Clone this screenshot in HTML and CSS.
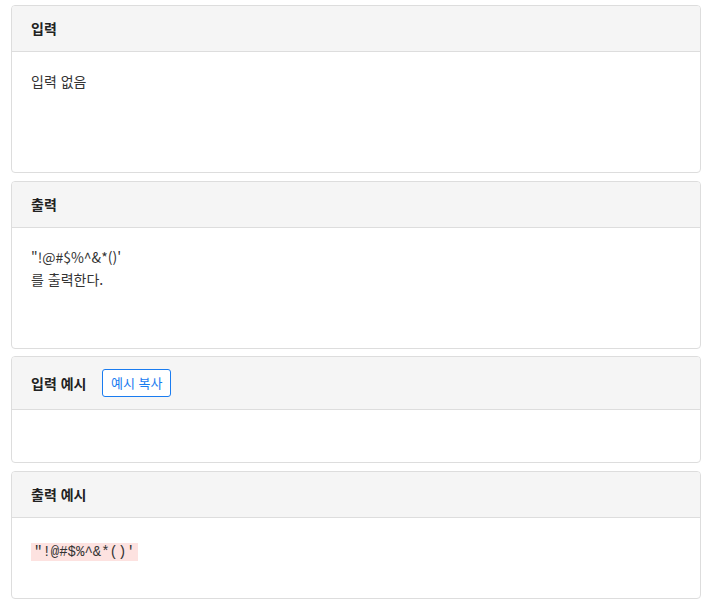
FILE: index.html
```html
<!DOCTYPE html>
<html lang="ko">
<head>
<meta charset="utf-8">
<title>문제</title>
<link rel="stylesheet" href="styles.css">
</head>
<body>
<div class="page">
  <section class="panel">
    <div class="panel-head"><h3 class="panel-title">입력</h3></div>
    <div class="panel-body desc">
      <p>입력 없음</p>
    </div>
  </section>
  <section class="panel">
    <div class="panel-head"><h3 class="panel-title">출력</h3></div>
    <div class="panel-body desc">
      <p>"!@#$%^&amp;*()'<br>를 출력한다.</p>
    </div>
  </section>
  <section class="panel">
    <div class="panel-head">
      <h3 class="panel-title">입력 예시</h3>
      <button class="copy-btn" type="button">예시 복사</button>
    </div>
    <div class="panel-body sample-empty"></div>
  </section>
  <section class="panel">
    <div class="panel-head"><h3 class="panel-title">출력 예시</h3></div>
    <div class="panel-body sample">
      <code class="sample-code">"!@#$%^&amp;*()'</code>
    </div>
  </section>
</div>
</body>
</html>
```
FILE: styles.css
```css
html, body {
  margin: 0;
  padding: 0;
  background: #fff;
}
body {
  font-family: "Noto Sans CJK KR", "Noto Sans", sans-serif;
  font-size: 14px;
  color: #333;
}
.page {
  width: 690px;
  padding: 5px 0 0 11px;
}
.panel {
  border: 1px solid #ddd;
  border-radius: 4px;
  margin-bottom: 7.6px;
  overflow: hidden;
}
.panel-head {
  display: flex;
  align-items: center;
  gap: 16px;
  padding: 12px 19px;
  background: #f5f5f5;
  border-bottom: 1px solid #ddd;
}
.panel-title {
  margin: 0;
  font-size: 14px;
  line-height: 21px;
  font-weight: 700;
  color: #222;
}
.copy-btn {
  font-family: "Noto Sans CJK KR", "Noto Sans", sans-serif;
  font-size: 13px;
  line-height: 18px;
  padding: 4px 7.5px;
  border: 1px solid #1a7cf0;
  border-radius: 3px;
  background: #fff;
  color: #1a7cf0;
}
.panel-body {
  padding: 0 19px;
}
.desc {
  box-sizing: border-box;
  min-height: 120px;
  padding-top: 18px;
  padding-bottom: 18px;
}
.desc p {
  margin: 0;
  line-height: 22px;
}
.sample-empty {
  height: 52px;
}
.sample {
  padding-top: 22px;
  padding-bottom: 37px;
}
.sample-code {
  display: inline-block;
  font-family: "Liberation Mono", "DejaVu Sans Mono", monospace;
  font-size: 14px;
  line-height: 18px;
  padding: 0 3px;
  background: #fde2e0;
  color: #333;
}
```
